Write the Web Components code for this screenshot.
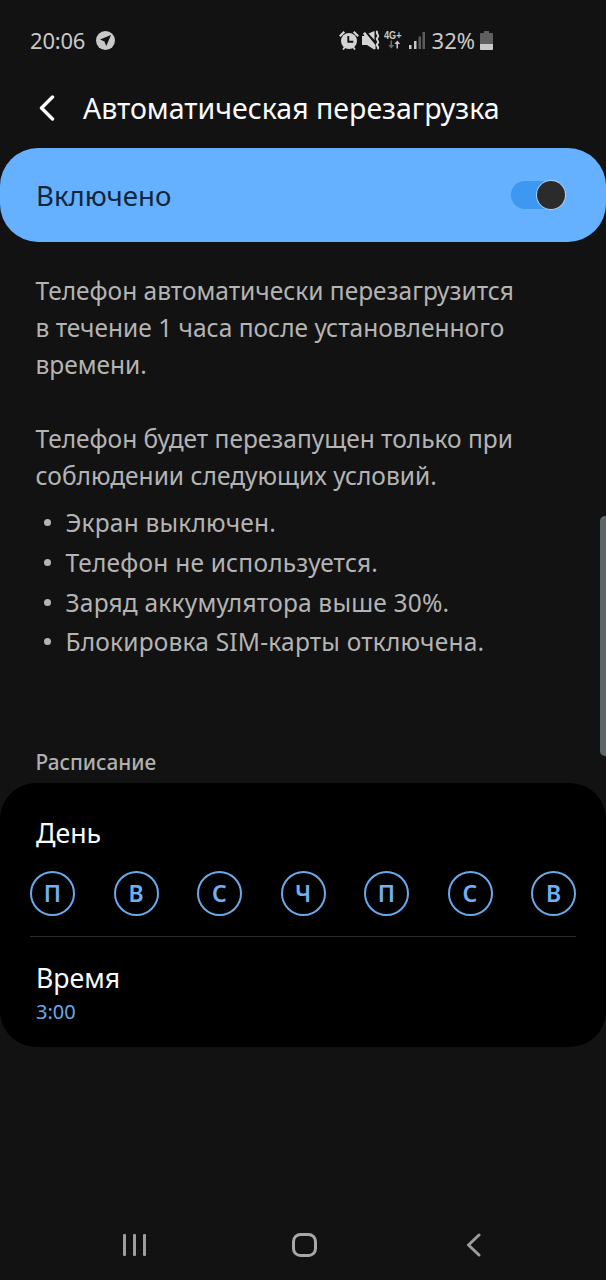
<!DOCTYPE html>
<html lang="ru">
<head>
<meta charset="utf-8">
<title>Автоматическая перезагрузка</title>
<style>
  html, body { margin: 0; height: 100%; background: #121212; }
  body { font-family: "Noto Sans", "Open Sans", sans-serif; }
  #screen { position: relative; width: 606px; height: 1280px; overflow: hidden; display: flex; flex-direction: column; }
</style>
</head>
<body>
<div id="screen">
  <status-bar></status-bar>
  <app-header>Автоматическая перезагрузка</app-header>
  <master-switch>Включено</master-switch>
  <info-text></info-text>
  <schedule-card></schedule-card>
  <nav-bar></nav-bar>
  <scroll-thumb></scroll-thumb>
</div>

<script>
class StatusBar extends HTMLElement {
  constructor() {
    super();
    this.attachShadow({ mode: "open" });
  }
  connectedCallback() {
    this.shadowRoot.innerHTML = `
      <style>
        :host { display: flex; align-items: center; height: 80px; padding: 0 113px 0 30px; color: #c9c9c9; font-size: 22px; }
        .time { margin-right: 11px; letter-spacing: -0.2px; }
        .right { margin-left: auto; display: flex; align-items: center; }
        .pct { margin: 0 5px 0 7px; font-size: 22px; }
        svg { display: block; }
      </style>
      <span class="time">20:06</span>
      <svg width="19" height="19" viewBox="0 0 19 19"><circle cx="9.5" cy="9.5" r="9.5" fill="#c9c9c9"/><path d="M15 4 4 8.6l4.4 1.9 1.9 4.5z" fill="#121212"/></svg>
      <div class="right">
        <svg width="20" height="20" viewBox="0 0 20 20" fill="#d4d4d4">
          <circle cx="10" cy="11" r="8"/><path d="M0 5.500 4.500 1l1.600 1.500-4.500 4.500zM20 5.500 15.500 1l-1.600 1.500 4.500 4.500z"/>
          <path d="M9.300 6v5.800h5" stroke="#121212" stroke-width="1.900" fill="none"/>
          <path d="M4 19.500l2-2.500M16 19.500l-2-2.500" stroke="#d4d4d4" stroke-width="1.800"/>
        </svg>
        <svg style="margin-left:3px" width="18" height="20" viewBox="0 0 18 20" fill="#d4d4d4">
          <path d="M0 6h2.500L1 3.500 3 2l10.500 13v4L12 19.500 5 15H0zM6.500 3.500 12.500 1v9z"/>
          <path d="M15.500 1c-2.500 2.500 2.500 4 0 6.500s2.500 3.500 0 6 2.500 3 0 5.500" stroke="#d4d4d4" stroke-width="2" fill="none"/>
        </svg>
        <svg style="margin-left:4px" width="18" height="20" viewBox="0 0 18 20" fill="#c9c9c9">
          <text x="0" y="9" font-size="10" font-weight="700" textLength="17.500" lengthAdjust="spacingAndGlyphs" font-family="Liberation Sans, sans-serif">4G+</text>
          <path d="M6.500 10.500v4.500H4.300l2.900 3.500 2.900-3.500H8v-4.500z" fill="#6e6e6e"/>
          <path d="M14 18.500V14h2.200l-2.900-3.500-2.900 3.500h2.100v4.500z"/>
        </svg>
        <svg style="margin-left:6px" width="17" height="19" viewBox="0 0 17 19">
          <rect x="1" y="14" width="2.500" height="4" fill="#c9c9c9"/>
          <rect x="6" y="10" width="2.500" height="8" fill="#c9c9c9"/>
          <rect x="10.500" y="5.500" width="2.500" height="12.500" fill="#5c5c5c"/>
          <rect x="14.500" y="1" width="2.500" height="17" fill="#5c5c5c"/>
        </svg>
        <span class="pct">32%</span>
        <svg width="13" height="19" viewBox="0 0 13 19">
          <path d="M4 0h5v2h3a1 1 0 0 1 1 1v15a1 1 0 0 1-1 1H1a1 1 0 0 1-1-1V3a1 1 0 0 1 1-1h3z" fill="#5f5f5f"/>
          <path d="M0 13h13v5a1 1 0 0 1-1 1H1a1 1 0 0 1-1-1z" fill="#c9c9c9"/>
        </svg>
      </div>`;
  }
}

class AppHeader extends HTMLElement {
  constructor() {
    super();
    this.attachShadow({ mode: "open" });
  }
  connectedCallback() {
    this.shadowRoot.innerHTML = `
      <style>
        :host { display: flex; align-items: center; height: 68px; padding: 0 0 13px 38px; box-sizing: border-box; color: #fafafa; font-size: 28.500px; }
        svg { margin-right: 28px; display: block; }
      </style>
      <svg width="17" height="26" viewBox="0 0 17 26"><path d="M14.500 2 3.500 13l11 11" fill="none" stroke="#fafafa" stroke-width="3.400" stroke-linecap="round" stroke-linejoin="round"/></svg>
      <slot></slot>`;
  }
}

class MasterSwitch extends HTMLElement {
  constructor() {
    super();
    this.attachShadow({ mode: "open" });
  }
  connectedCallback() {
    this.shadowRoot.innerHTML = `
      <style>
        :host { display: flex; align-items: center; justify-content: space-between; box-sizing: border-box; height: 94px; padding: 0 41px 0 36px; background: #66b1ff; border-radius: 38px; color: #10263d; font-size: 27.600px; }
        .track { position: relative; width: 54px; height: 28px; border-radius: 14px; background: #3d98f2; }
        .knob { position: absolute; right: 0; top: 0; box-sizing: border-box; width: 28px; height: 28px; border-radius: 50%; background: #2b2b2b; box-shadow: 0 0 0 1px #a9d0f5; }
      </style>
      <slot></slot>
      <div class="track"><div class="knob"></div></div>`;
  }
}

class InfoText extends HTMLElement {
  constructor() {
    super();
    this.attachShadow({ mode: "open" });
  }
  connectedCallback() {
    this.shadowRoot.innerHTML = `
      <style>
        :host { display: block; padding: 30px 36px 0 35.500px; color: #b4b4b4; font-size: 24.500px; line-height: 37px; }
        p { margin: 0 0 37px; }
        p.cond { margin-bottom: 9px; }
        ul { margin: 0; padding: 0; list-style: none; }
        li { display: flex; align-items: center; height: 39.700px; letter-spacing: 0.2px; }
        li::before { content: ""; width: 7px; height: 7px; margin: 0 15px 0 8px; border-radius: 50%; background: #b4b4b4; }
        h2 { margin: 86px 0 0; font-size: 20.800px; line-height: 28px; font-weight: 500; color: #b0b0b0; }
      </style>
      <p>Телефон автоматически перезагрузится<br>в течение 1 часа после установленного<br>времени.</p>
      <p class="cond">Телефон будет перезапущен только при<br>соблюдении следующих условий.</p>
      <ul>
        <li>Экран выключен.</li>
        <li>Телефон не используется.</li>
        <li>Заряд аккумулятора выше 30%.</li>
        <li>Блокировка SIM-карты отключена.</li>
      </ul>
      <h2>Расписание</h2>`;
  }
}

class DayCircle extends HTMLElement {
  constructor() {
    super();
    this.attachShadow({ mode: "open" });
  }
  connectedCallback() {
    this.shadowRoot.innerHTML = `
      <style>
        :host { display: flex; align-items: center; justify-content: center; box-sizing: border-box; width: 45px; height: 45px; border: 2px solid #6aa9e9; border-radius: 50%; color: #6fb1f5; font-size: 23px; font-weight: 600; }
      </style>
      <slot></slot>`;
  }
}

class ScheduleCard extends HTMLElement {
  constructor() {
    super();
    this.attachShadow({ mode: "open" });
  }
  connectedCallback() {
    const days = ["П", "В", "С", "Ч", "П", "С", "В"];
    this.shadowRoot.innerHTML = `
      <style>
        :host { display: block; box-sizing: border-box; height: 264px; margin-top: 7px; background: #000; border-radius: 36px; color: #fafafa; }
        .title { font-size: 26.700px; line-height: 36px; padding-left: 36px; }
        .day { padding-top: 32px; }
        .days { display: flex; justify-content: space-between; padding: 20px 30px 20px; }
        hr { margin: 0 30px; border: 0; height: 1px; background: #2c2c2c; }
        .time { padding-top: 23px; }
        .value { padding-left: 36px; font-size: 20px; line-height: 28px; padding-top: 2px; color: #6aa9e9; }
      </style>
      <div class="day title">День</div>
      <div class="days">${days.map((d) => `<day-circle>${d}</day-circle>`).join("")}</div>
      <hr>
      <div class="time title">Время</div>
      <div class="value">3:00</div>`;
  }
}

class NavBar extends HTMLElement {
  constructor() {
    super();
    this.attachShadow({ mode: "open" });
  }
  connectedCallback() {
    this.shadowRoot.innerHTML = `
      <style>
        :host { display: flex; align-items: center; justify-content: space-between; margin-top: auto; height: 70px; padding: 0 125px 0 123px; box-sizing: border-box; }
        svg { display: block; margin-top: -1px; }
        .home { margin-right: 3px; }
      </style>
      <svg width="23" height="24" viewBox="0 0 23 24" fill="#9d9d9d"><rect x="0" y="1" width="3" height="22" rx="1"/><rect x="10" y="1" width="3" height="22" rx="1"/><rect x="20" y="1" width="3" height="22" rx="1"/></svg>
      <svg class="home" width="25" height="24" viewBox="0 0 25 24"><rect x="1.500" y="1.500" width="22" height="21" rx="7" fill="none" stroke="#a8a8a8" stroke-width="3"/></svg>
      <svg width="15" height="24" viewBox="0 0 15 24"><path d="M13 2 2.500 12 13 22" fill="none" stroke="#9d9d9d" stroke-width="3" stroke-linecap="round" stroke-linejoin="round"/></svg>`;
  }
}

class ScrollThumb extends HTMLElement {
  constructor() {
    super();
    this.attachShadow({ mode: "open" });
  }
  connectedCallback() {
    this.shadowRoot.innerHTML = `
      <style>
        :host { position: absolute; right: 0; top: 516px; width: 6px; height: 240px; background: #5c6669; border-radius: 5px 0 0 5px; }
      </style>`;
  }
}

customElements.define("status-bar", StatusBar);
customElements.define("app-header", AppHeader);
customElements.define("master-switch", MasterSwitch);
customElements.define("info-text", InfoText);
customElements.define("day-circle", DayCircle);
customElements.define("schedule-card", ScheduleCard);
customElements.define("nav-bar", NavBar);
customElements.define("scroll-thumb", ScrollThumb);
</script>
</body>
</html>
